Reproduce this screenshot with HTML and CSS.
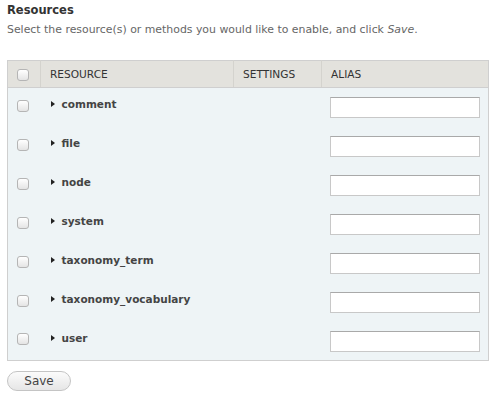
FILE: index.html
```html
<!DOCTYPE html>
<html>

<head lang="en">
    <meta charset="UTF-8">
    <title>Resources</title>
    <link rel="stylesheet" href="styles.css">
</head>

<body>
    <div class="page">
        <h2 class="res-title">Resources</h2>
        <p class="res-desc">Select the resource(s) or methods you would like to enable, and click <em>Save</em>.</p>

        <table class="res-table">
            <thead>
                <tr>
                    <th class="col-check"><span class="cbox"></span></th>
                    <th class="col-name">Resource</th>
                    <th class="col-settings">Settings</th>
                    <th class="col-alias">Alias</th>
                </tr>
            </thead>
            <tbody>
                <tr>
                    <td class="col-check"><span class="cbox"></span></td>
                    <td class="col-name"><span class="arrow"></span>comment</td>
                    <td></td>
                    <td class="col-alias"><input type="text" class="alias-input"></td>
                </tr>
                <tr>
                    <td class="col-check"><span class="cbox"></span></td>
                    <td class="col-name"><span class="arrow"></span>file</td>
                    <td></td>
                    <td class="col-alias"><input type="text" class="alias-input"></td>
                </tr>
                <tr>
                    <td class="col-check"><span class="cbox"></span></td>
                    <td class="col-name"><span class="arrow"></span>node</td>
                    <td></td>
                    <td class="col-alias"><input type="text" class="alias-input"></td>
                </tr>
                <tr>
                    <td class="col-check"><span class="cbox"></span></td>
                    <td class="col-name"><span class="arrow"></span>system</td>
                    <td></td>
                    <td class="col-alias"><input type="text" class="alias-input"></td>
                </tr>
                <tr>
                    <td class="col-check"><span class="cbox"></span></td>
                    <td class="col-name"><span class="arrow"></span>taxonomy_term</td>
                    <td></td>
                    <td class="col-alias"><input type="text" class="alias-input"></td>
                </tr>
                <tr>
                    <td class="col-check"><span class="cbox"></span></td>
                    <td class="col-name"><span class="arrow"></span>taxonomy_vocabulary</td>
                    <td></td>
                    <td class="col-alias"><input type="text" class="alias-input"></td>
                </tr>
                <tr>
                    <td class="col-check"><span class="cbox"></span></td>
                    <td class="col-name"><span class="arrow"></span>user</td>
                    <td></td>
                    <td class="col-alias"><input type="text" class="alias-input"></td>
                </tr>
            </tbody>
        </table>

        <div class="actions"><button class="save-btn">Save</button></div>
    </div>
</body>

</html>
```

FILE: styles.css
```css
* {
    padding: 0px;
    margin: 0px;
    box-sizing: border-box;
}

body {
    background: #ffffff;
    font-family: "DejaVu Sans", Verdana, sans-serif;
    color: #333333;
}

.page {
    padding: 3px 7px 0px 7px;
}

.res-title {
    font-size: 11.5px;
    font-weight: bold;
    color: #333333;
    line-height: 15px;
}

.res-desc {
    font-size: 10.9px;
    color: #666666;
    line-height: 15px;
    margin-top: 4px;
}

/* table */
.res-table {
    margin-top: 23px;
    width: 482px;
    border-collapse: collapse;
    border: #cfcfcf solid 1px;
    background: #eef4f6;
    table-layout: fixed;
}

.res-table th {
    height: 27px;
    background: #e3e2dd;
    border-right: #d4d3ce solid 1px;
    border-bottom: #cfcfcf solid 1px;
    font-size: 10.6px;
    font-weight: normal;
    text-transform: uppercase;
    text-align: left;
    color: #333333;
    padding-left: 9px;
}

.res-table th:last-child {
    border-right: none;
}

.res-table td {
    height: 39px;
    vertical-align: middle;
}

.col-check {
    width: 33px;
}

.res-table th.col-check,
.res-table td.col-check {
    padding-left: 9px;
}

.col-name {
    width: 193px;
}

.col-settings {
    width: 88px;
}

.res-table td.col-name {
    font-size: 10.5px;
    font-weight: bold;
    color: #444444;
    padding-left: 10px;
    padding-bottom: 6px;
}

.res-table td.col-alias {
    padding-left: 8px;
    padding-top: 1px;
}

.cbox {
    display: inline-block;
    width: 12px;
    height: 12px;
    border: #b5b5b5 solid 1px;
    border-radius: 3px;
    background: linear-gradient(#ffffff, #e4e4e4);
    vertical-align: middle;
}

.res-table td .cbox {
    margin-bottom: 5px;
}

.arrow {
    display: inline-block;
    width: 0;
    height: 0;
    border-top: 3.5px solid transparent;
    border-bottom: 3.5px solid transparent;
    border-left: 4px solid #222222;
    margin-right: 7px;
    vertical-align: 1px;
}

.alias-input {
    display: block;
    width: 150px;
    height: 21px;
    border: #c8c8c8 solid 1px;
    border-top-color: #a9a9a9;
    background: #ffffff;
    outline: none;
}

/* button */
.actions {
    margin-top: 9px;
}

.save-btn {
    width: 64px;
    height: 20px;
    border: #c4c4c4 solid 1px;
    border-radius: 10px;
    background: linear-gradient(#fbfbfb, #e6e6e6);
    font-family: "DejaVu Sans", Verdana, sans-serif;
    font-size: 12px;
    color: #444444;
}
```
